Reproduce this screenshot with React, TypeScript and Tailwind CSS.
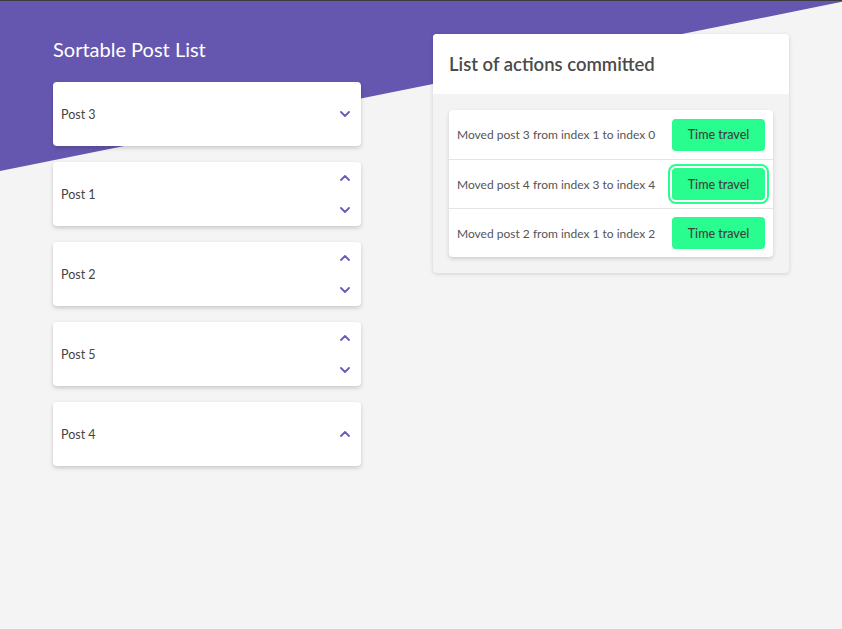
const posts = [
  { id: 3, up: false, down: true },
  { id: 1, up: true, down: true },
  { id: 2, up: true, down: true },
  { id: 5, up: true, down: true },
  { id: 4, up: true, down: false },
];

const actions = [
  { text: "Moved post 3 from index 1 to index 0", focus: false },
  { text: "Moved post 4 from index 3 to index 4", focus: true },
  { text: "Moved post 2 from index 1 to index 2", focus: false },
];

function Chevron({ dir }: { dir: "up" | "down" }) {
  return (
    <svg width="10" height="6" viewBox="0 0 10 6" fill="none">
      <path
        d={dir === "up" ? "M1 5 L5 1 L9 5" : "M1 1 L5 5 L9 1"}
        stroke="#6a5bb8"
        strokeWidth="1.8"
        strokeLinecap="round"
        strokeLinejoin="round"
      />
    </svg>
  );
}

export default function App() {
  return (
    <main
      className="relative min-h-[629px] bg-[#f4f4f4] border-t border-[#3c3c3c] overflow-hidden"
      style={{ fontFamily: 'Lato, "Open Sans", sans-serif' }}
    >
      <div
        className="absolute inset-x-0 top-0 h-[170px] bg-[#6557b0]"
        style={{ clipPath: "polygon(0 0, 100% 0, 100% 0.5%, 0 100%)" }}
      />
      <div className="relative flex gap-[72px] pl-[53px] pt-[33px]">
        <section className="w-[308px]">
          <h1 className="text-[20px] leading-[28px] text-white mt-px mb-[19px]">Sortable Post List</h1>
          <ul className="flex flex-col gap-4">
            {posts.map((p) => (
              <li
                key={p.id}
                className="flex items-center justify-between h-16 bg-white rounded-[4px] shadow-[0_2px_4px_rgba(0,0,0,0.18)] pl-2 pr-2"
              >
                <span className="text-[12.5px] text-[#444] pt-[2px]">Post {p.id}</span>
                <div className="flex flex-col justify-center h-full">
                  {p.up && (
                    <button className="h-8 w-4 flex items-center justify-center">
                      <Chevron dir="up" />
                    </button>
                  )}
                  {p.down && (
                    <button className="h-8 w-4 flex items-center justify-center">
                      <Chevron dir="down" />
                    </button>
                  )}
                </div>
              </li>
            ))}
          </ul>
        </section>

        <section className="w-[356px] h-max bg-[#f3f3f3] rounded-[4px] shadow-[0_1px_4px_rgba(0,0,0,0.15)] overflow-hidden">
          <div className="h-[60px] bg-white flex items-center px-4 pt-[2px]">
            <h2 className="text-[18.5px] font-semibold text-[#4a4a4a]">List of actions committed</h2>
          </div>
          <div className="p-4">
            <ul className="bg-white rounded-[4px] shadow-[0_2px_4px_rgba(0,0,0,0.15)]">
              {actions.map((a, i) => (
                <li
                  key={i}
                  className={`flex items-center justify-between h-[49px] pl-2 pr-2 ${i > 0 ? "border-t border-[#e4e4e4]" : ""}`}
                >
                  <span className="text-[12px] text-[#555] whitespace-nowrap pt-px">{a.text}</span>
                  <button
                    className={`w-[93px] h-8 pt-[2px] rounded-[4px] bg-[#29fd8f] text-[12.5px] font-medium text-[#3f3f3f] ${a.focus ? "outline-2 outline-offset-2 outline-[#29fd8f] outline" : ""}`}
                  >
                    Time travel
                  </button>
                </li>
              ))}
            </ul>
          </div>
        </section>
      </div>
    </main>
  );
}
